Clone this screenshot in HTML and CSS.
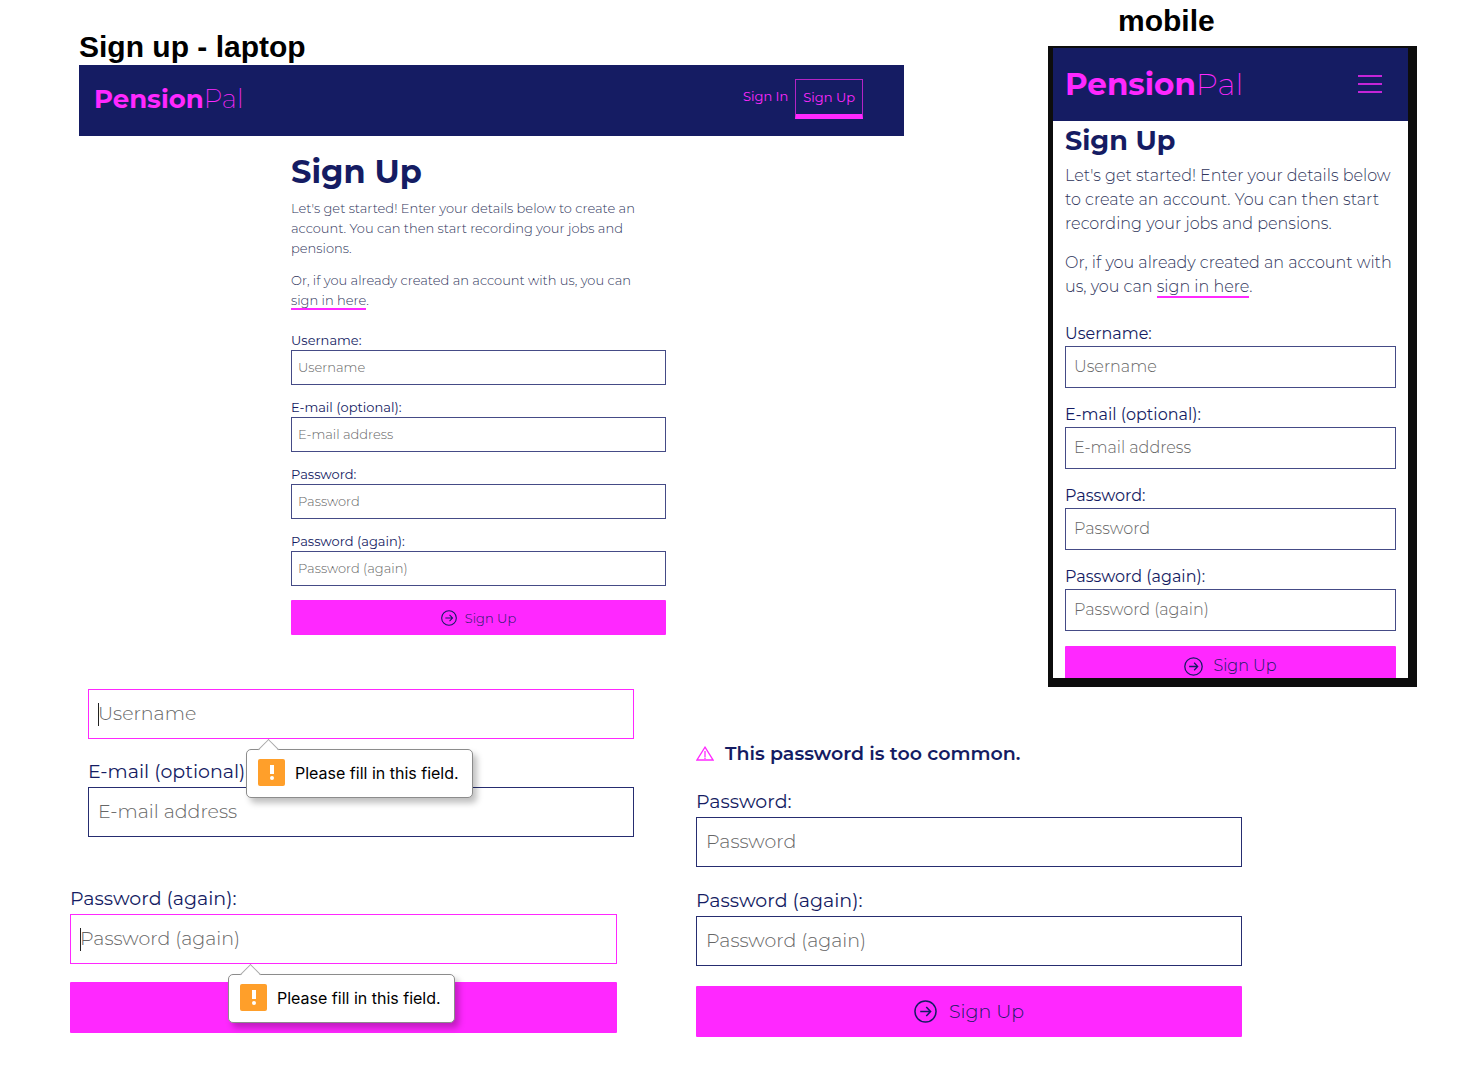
FILE: index.html
```html
<!DOCTYPE html>
<html lang="en">
<head>
<meta charset="utf-8">
<meta name="viewport" content="width=device-width, initial-scale=1">
<title>PensionPal sign up</title>
<link rel="stylesheet" href="styles.css">
</head>
<body>
<svg class="sprite" aria-hidden="true">
  <symbol id="arrow-circle" viewBox="0 0 24 24">
    <circle cx="12" cy="12" r="11"/>
    <path d="M6.5 12h10.5M12.8 7.3L17.3 12l-4.5 4.7"/>
  </symbol>
  <symbol id="warning" viewBox="0 0 18 16">
    <path d="M9 1.2L17 14H1z"/>
    <path d="M9 5v6M9 11.6v1.4"/>
  </symbol>
  <symbol id="menu" viewBox="0 0 24 20">
    <path d="M0 2h24M0 10h24M0 18h24"/>
  </symbol>
</svg>

<main>
  <div class="screens">
    <section class="laptop">
      <h2 class="caption">Sign up - laptop</h2>
      <header class="bar">
        <a class="logo" href="#"><b>Pension</b>Pal</a>
        <nav class="nav">
          <a href="#">Sign In</a>
          <a class="current" href="#">Sign Up</a>
        </nav>
      </header>
      <form class="form form-small">
        <h1>Sign Up</h1>
        <p>Let's get started! Enter your details below to create an account. You can then start recording your jobs and pensions.</p>
        <p>Or, if you already created an account with us, you can <a href="#">sign in here</a>.</p>
        <div class="fields">
          <div class="field"><label for="l-user">Username:</label><input id="l-user" type="text" placeholder="Username"></div>
          <div class="field"><label for="l-mail">E-mail (optional):</label><input id="l-mail" type="email" placeholder="E-mail address"></div>
          <div class="field"><label for="l-pass">Password:</label><input id="l-pass" type="password" placeholder="Password"></div>
          <div class="field"><label for="l-again">Password (again):</label><input id="l-again" type="password" placeholder="Password (again)"></div>
        </div>
        <button type="button"><svg class="icon"><use href="#arrow-circle"/></svg>Sign Up</button>
      </form>
    </section>

    <section class="mobile">
      <h2 class="caption">mobile</h2>
      <div class="phone">
        <div class="phone-screen">
          <header class="bar">
            <a class="logo" href="#"><b>Pension</b>Pal</a>
            <button class="menu" type="button" aria-label="Menu"><svg><use href="#menu"/></svg></button>
          </header>
          <form class="form form-medium">
            <h1>Sign Up</h1>
            <p>Let's get started! Enter your details below to create an account. You can then start recording your jobs and pensions.</p>
            <p>Or, if you already created an account with us, you can <a href="#">sign in here</a>.</p>
            <div class="fields">
              <div class="field"><label for="m-user">Username:</label><input id="m-user" type="text" placeholder="Username"></div>
              <div class="field"><label for="m-mail">E-mail (optional):</label><input id="m-mail" type="email" placeholder="E-mail address"></div>
              <div class="field"><label for="m-pass">Password:</label><input id="m-pass" type="password" placeholder="Password"></div>
              <div class="field"><label for="m-again">Password (again):</label><input id="m-again" type="password" placeholder="Password (again)"></div>
            </div>
            <button type="button"><svg class="icon"><use href="#arrow-circle"/></svg>Sign Up</button>
          </form>
        </div>
      </div>
    </section>
  </div>

  <div class="states">
    <section class="required">
      <form class="form form-large required-user">
        <div class="fields">
          <div class="field invalid">
            <input id="r-user" type="text" placeholder="Username" aria-label="Username">
            <span class="caret"></span>
            <div class="tip" role="alert"><span class="tip-icon"></span>Please fill in this field.</div>
          </div>
          <div class="field"><label for="r-mail">E-mail (optional):</label><input id="r-mail" type="email" placeholder="E-mail address"></div>
        </div>
      </form>
      <form class="form form-large required-again">
        <div class="fields">
          <div class="field invalid">
            <label for="r-again">Password (again):</label>
            <input id="r-again" type="password" placeholder="Password (again)">
            <span class="caret"></span>
            <div class="tip" role="alert"><span class="tip-icon"></span>Please fill in this field.</div>
          </div>
        </div>
        <button type="button" aria-label="Sign Up"></button>
      </form>
    </section>

    <section class="common">
      <form class="form form-large">
        <div class="alert" role="alert"><svg><use href="#warning"/></svg>This password is too common.</div>
        <div class="fields">
          <div class="field"><label for="c-pass">Password:</label><input id="c-pass" type="password" placeholder="Password"></div>
          <div class="field"><label for="c-again">Password (again):</label><input id="c-again" type="password" placeholder="Password (again)"></div>
        </div>
        <button type="button"><svg class="icon"><use href="#arrow-circle"/></svg>Sign Up</button>
      </form>
    </section>
  </div>
</main>
</body>
</html>
```

FILE: styles.css
```css
:root {
  --navy: #151c63;
  --pink: #ff28ff;
  --line: #454b86;
  --body: #30365c;
  --hint: #666;
}

* { box-sizing: border-box; }

body {
  margin: 0;
  background: #fff;
  color: var(--navy);
  font-family: Montserrat, Inter, sans-serif;
}

h1, h2, p { margin: 0; }

svg {
  fill: none;
  stroke: currentColor;
}

.sprite {
  position: absolute;
  width: 0;
  height: 0;
}

.caption {
  color: #000;
  font: bold 30px/36px "Liberation Sans", Arial, sans-serif;
}

/* Page rows */
.screens {
  display: grid;
  grid-template-columns: 825fr 369fr;
  column-gap: 144px;
  align-items: start;
  padding: 0 57px 0 79px;
}

.laptop { padding-top: 29px; }
.mobile { padding-top: 3px; }
.mobile .caption { padding: 0 0 7px 70px; }

.states {
  display: grid;
  grid-template-columns: 564fr 546fr;
  column-gap: 62px;
  padding: 2px 232px 40px 70px;
}

.required-user { margin-left: 18px; }
.required-again { margin: 29px 17px 0 0; }
.common { padding-top: 50px; }

/* Header bars */
.bar {
  display: flex;
  align-items: center;
  justify-content: space-between;
  background: var(--navy);
}

.laptop .bar {
  height: 71px;
  padding: 0 41px 4px 15px;
}

.logo {
  color: var(--pink);
  font-size: 26px;
  font-weight: 200;
  text-decoration: none;
}

.logo b { font-weight: 700; }

.nav {
  display: flex;
  align-items: flex-start;
  gap: 7px;
  font-size: 13px;
  line-height: 34px;
}

.nav a {
  color: var(--pink);
  text-decoration: none;
}

.nav .current {
  padding: 0 7px;
  border: 1px solid #b423c4;
  border-bottom: 5px solid var(--pink);
}

.phone {
  padding: 2px 9px 9px 5px;
  background: #0d0d0d;
}

.phone-screen {
  overflow: hidden;
  background: #fff;
}

.mobile .bar {
  height: 73px;
  padding: 0 26px 2px 12px;
}

.mobile .logo { font-size: 31px; }

.menu {
  padding: 0;
  border: 0;
  background: none;
  color: var(--pink);
}

.menu svg {
  display: block;
  width: 24px;
  height: 20px;
  stroke-width: 1.5;
}

/* Forms */
.form p {
  color: var(--body);
  font-weight: 300;
}

.form p a {
  border-bottom: 2px solid var(--pink);
  color: inherit;
  text-decoration: none;
  white-space: nowrap;
}

.fields {
  display: flex;
  flex-direction: column;
}

.field {
  position: relative;
  display: flex;
  flex-direction: column;
}

.field input {
  width: 100%;
  border: 1px solid var(--line);
  border-radius: 0;
  outline: 0;
  background: #fff;
  color: var(--navy);
  font: inherit;
  font-weight: 300;
}

.field input::placeholder {
  color: var(--hint);
  opacity: 1;
}

.form > button {
  display: flex;
  align-items: center;
  justify-content: center;
  width: 100%;
  border: 0;
  border-radius: 1px;
  background: var(--pink);
  color: var(--navy);
  font: inherit;
  font-weight: 300;
}

.form-small {
  margin: 16px 238px 0 212px;
  font-size: 13px;
  line-height: 20px;
}

.form-small h1 {
  margin-bottom: 6px;
  font-size: 32px;
  line-height: 40px;
}

.form-small p { margin-bottom: 12px; }
.form-small .fields { gap: 12px; padding: 8px 0 14px; }
.form-small input { height: 35px; padding: 0 6px 2px; }
.form-small > button { height: 35px; gap: 8px; }
.form-small .icon { width: 16px; height: 16px; stroke-width: 1.6; }

.form-medium {
  margin-bottom: -8px;
  padding: 2px 12px 0;
  font-size: 16px;
  line-height: 24px;
}

.form-medium h1 {
  margin-bottom: 5px;
  font-size: 27px;
  line-height: 36px;
}

.form-medium p { margin-bottom: 15px; }
.form-medium .fields { gap: 15px; padding: 8px 0 15px; }
.form-medium input { height: 42px; padding: 0 8px 2px; }
.form-medium > button { height: 40px; gap: 10px; }
.form-medium .icon { width: 19px; height: 19px; stroke-width: 1.6; }

.form-large {
  --line: #262d70;
  font-size: 19px;
  line-height: 30px;
}

.form-large .fields { gap: 19px; padding-bottom: 20px; }
.form-large input { height: 50px; padding: 0 9px 2px; }
.form-large > button { height: 51px; gap: 12px; }
.form-large .icon { width: 23px; height: 23px; stroke-width: 1.6; }

.required .fields { gap: 18px; padding-bottom: 18px; }

/* Messages */
.alert {
  display: flex;
  align-items: center;
  gap: 11px;
  margin-bottom: 18px;
  font-weight: 600;
}

.alert svg {
  width: 18px;
  height: 16px;
  color: var(--pink);
  stroke-width: 1.3;
}

.invalid input { border-color: var(--pink); }

.caret {
  position: absolute;
  bottom: 13px;
  left: 10px;
  width: 1px;
  height: 23px;
  background: #222;
}

.tip {
  position: absolute;
  top: calc(100% + 10px);
  left: 158px;
  z-index: 1;
  display: flex;
  align-items: center;
  gap: 10px;
  height: 49px;
  padding: 0 13px 2px 11px;
  border: 1px solid #8c8c8c;
  border-radius: 5px;
  background: #fff;
  box-shadow: 4px 5px 6px rgba(0, 0, 0, 0.25);
  color: #000;
  font-family: Inter, sans-serif;
  font-size: 16px;
  white-space: nowrap;
}

.tip::before {
  content: "";
  position: absolute;
  top: -8px;
  left: 14px;
  width: 14px;
  height: 14px;
  border: solid #a8a8a8;
  border-width: 1px 0 0 1px;
  background: linear-gradient(135deg, #fff 50%, transparent 50%);
  transform: rotate(45deg);
}

.tip-icon {
  display: flex;
  flex-direction: column;
  align-items: center;
  justify-content: center;
  gap: 2px;
  width: 27px;
  height: 27px;
  border-radius: 2px;
  background: #ff9f2a;
}

.tip-icon::before,
.tip-icon::after {
  content: "";
  width: 4px;
  height: 9px;
  background: #fff;
}

.tip-icon::after {
  height: 4px;
  border-radius: 50%;
}
```
